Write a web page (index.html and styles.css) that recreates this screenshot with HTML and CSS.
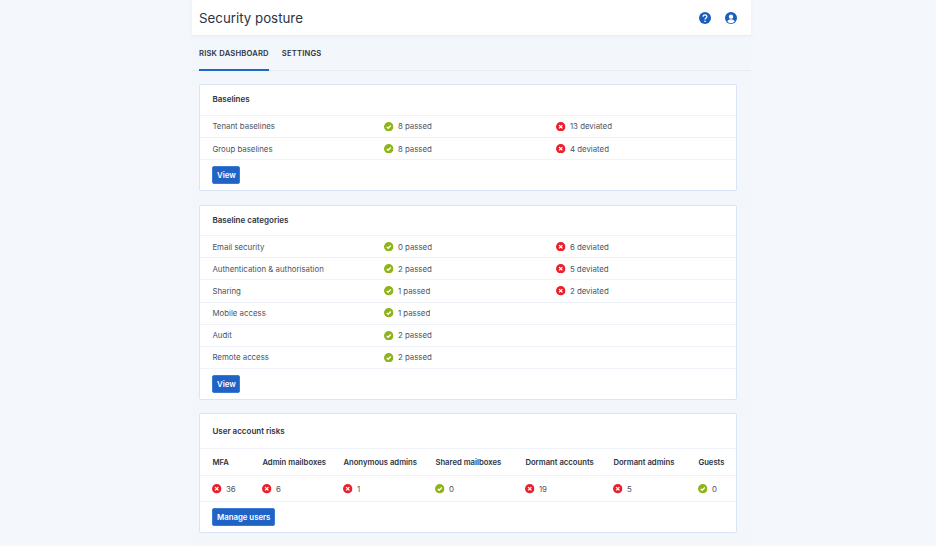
FILE: index.html
```html
<!DOCTYPE html>
<html lang="en">
<head>
    <meta charset="UTF-8">
    <title>Security posture</title>
    <link rel="stylesheet" href="styles.css">
</head>
<body>
<svg class="sprites" width="0" height="0">
    <symbol id="ok" viewBox="0 0 16 16">
        <circle cx="8" cy="8" r="8" fill="#8fb31a"/>
        <path d="M4.6 8.2l2.4 2.4 4.4-4.8" fill="none" stroke="#fff" stroke-width="2.2"/>
    </symbol>
    <symbol id="bad" viewBox="0 0 16 16">
        <circle cx="8" cy="8" r="8" fill="#e8202c"/>
        <path d="M5.2 5.2l5.6 5.6M10.8 5.2l-5.6 5.6" fill="none" stroke="#fff" stroke-width="2.2"/>
    </symbol>
</svg>
<div class="page">
    <header class="topbar">
        <h1>Security posture</h1>
        <div class="topbar-icons">
            <svg class="topicon" viewBox="0 0 16 16">
                <circle cx="8" cy="8" r="8" fill="#1a5dbd"/>
                <path d="M5.5 6.2a2.5 2.3 0 1 1 3.9 1.9c-.9.6-1.4 1-1.4 2" fill="none" stroke="#fff" stroke-width="1.7"/>
                <circle cx="8" cy="12.4" r="1.1" fill="#fff"/>
            </svg>
            <svg class="topicon" viewBox="0 0 16 16">
                <circle cx="8" cy="8" r="8" fill="#1a5dbd"/>
                <circle cx="8" cy="6.2" r="2.9" fill="#fff"/>
                <path d="M3 12.6c.8-2 2.8-2.9 5-2.9s4.2.9 5 2.9a6.6 6.6 0 0 1-10 0z" fill="#fff"/>
            </svg>
        </div>
    </header>
    <nav class="tabs">
        <a class="tab active">RISK DASHBOARD</a>
        <a class="tab">SETTINGS</a>
    </nav>
    <main class="content">
        <section class="card">
            <h2>Baselines</h2>
            <div class="row"><span>Tenant baselines</span><span class="stat"><svg class="ico"><use href="#ok"/></svg>8 passed</span><span class="stat"><svg class="ico"><use href="#bad"/></svg>13 deviated</span></div>
            <div class="row"><span>Group baselines</span><span class="stat"><svg class="ico"><use href="#ok"/></svg>8 passed</span><span class="stat"><svg class="ico"><use href="#bad"/></svg>4 deviated</span></div>
            <div class="actions"><button class="btn">View</button></div>
        </section>
        <section class="card">
            <h2>Baseline categories</h2>
            <div class="row"><span>Email security</span><span class="stat"><svg class="ico"><use href="#ok"/></svg>0 passed</span><span class="stat"><svg class="ico"><use href="#bad"/></svg>6 deviated</span></div>
            <div class="row"><span>Authentication &amp; authorisation</span><span class="stat"><svg class="ico"><use href="#ok"/></svg>2 passed</span><span class="stat"><svg class="ico"><use href="#bad"/></svg>5 deviated</span></div>
            <div class="row"><span>Sharing</span><span class="stat"><svg class="ico"><use href="#ok"/></svg>1 passed</span><span class="stat"><svg class="ico"><use href="#bad"/></svg>2 deviated</span></div>
            <div class="row"><span>Mobile access</span><span class="stat"><svg class="ico"><use href="#ok"/></svg>1 passed</span></div>
            <div class="row"><span>Audit</span><span class="stat"><svg class="ico"><use href="#ok"/></svg>2 passed</span></div>
            <div class="row"><span>Remote access</span><span class="stat"><svg class="ico"><use href="#ok"/></svg>2 passed</span></div>
            <div class="actions"><button class="btn">View</button></div>
        </section>
        <section class="card">
            <h2 class="tall">User account risks</h2>
            <div class="risks risks-head">
                <span>MFA</span><span>Admin mailboxes</span><span>Anonymous admins</span><span>Shared mailboxes</span><span>Dormant accounts</span><span>Dormant admins</span><span>Guests</span>
            </div>
            <div class="risks risks-vals">
                <span class="stat"><svg class="ico"><use href="#bad"/></svg>36</span>
                <span class="stat"><svg class="ico"><use href="#bad"/></svg>6</span>
                <span class="stat"><svg class="ico"><use href="#bad"/></svg>1</span>
                <span class="stat"><svg class="ico"><use href="#ok"/></svg>0</span>
                <span class="stat"><svg class="ico"><use href="#bad"/></svg>19</span>
                <span class="stat"><svg class="ico"><use href="#bad"/></svg>5</span>
                <span class="stat"><svg class="ico"><use href="#ok"/></svg>0</span>
            </div>
            <div class="actions"><button class="btn">Manage users</button></div>
        </section>
    </main>
</div>
</body>
</html>
```

FILE: styles.css
```css
html,body{
    margin:0;
    height:100%;
    overflow:hidden;
    background:#f4f7fc;
}
body{
    font-family:Inter,"Liberation Sans",sans-serif;
    font-size:7.85px;
    color:#4b5364;
}
.sprites{
    position:absolute;
}
.page{
    width:559px;
    min-height:100%;
    margin-left:192px;
    background:#f3f6fb;
}
.topbar{
    height:35px;
    padding:0 14.5px 0 7px;
    display:flex;
    align-items:center;
    justify-content:space-between;
    background:#fff;
    border-bottom:1px solid #e9edf4;
    box-shadow:0 0 4px rgba(190,205,230,0.15);
}
h1{
    margin:0;
    font-size:13.3px;
    font-weight:400;
    color:#2b3445;
}
.topbar-icons{
    display:flex;
    gap:14px;
}
.topicon{
    width:12px;
    height:12px;
    display:block;
}
.tabs{
    height:34px;
    padding:0 7px;
    display:flex;
    gap:13px;
    border-bottom:1px solid #e6ebf3;
}
.tab{
    height:35px;
    line-height:35px;
    box-sizing:border-box;
    font-size:7.6px;
    font-weight:600;
    letter-spacing:0.2px;
    color:#2b3445;
}
.tab.active{
    border-bottom:2px solid #1f66c9;
}
.content{
    padding:13.4px 14px 13px 7px;
    display:flex;
    flex-direction:column;
    gap:13.4px;
}
.card{
    background:#fff;
    border:1px solid #d9e4f4;
    border-radius:2px;
}
h2{
    margin:0;
    height:29.4px;
    line-height:29.4px;
    padding:0 12.4px;
    font-size:8px;
    font-weight:600;
    color:#2b3445;
}
h2.tall{
    height:34px;
    line-height:34px;
}
.row{
    height:22.2px;
    padding:0 12.4px;
    display:grid;
    grid-template-columns:172px 172px 1fr;
    align-items:center;
    border-top:1px solid #eff3f9;
    box-sizing:border-box;
}
.stat{
    display:flex;
    align-items:center;
    gap:4px;
}
.ico{
    width:9.5px;
    height:9.5px;
    flex:none;
}
.actions{
    padding:6px 12.4px;
    border-top:1px solid #eff3f9;
}
.btn{
    display:block;
    height:18px;
    padding:0 3.6px;
    font:600 7.8px Inter,"Liberation Sans",sans-serif;
    color:#fff;
    background:#1f63c6;
    border:1px solid #3f7ad2;
    border-radius:2px;
}
.risks{
    padding:0 12.4px;
    display:grid;
    grid-template-columns:50px 81px 92px 90px 88px 85px 1fr;
    align-items:center;
    border-top:1px solid #eff3f9;
    box-sizing:border-box;
}
.risks-head{
    height:27px;
    font-weight:600;
    font-size:7.7px;
    color:#2b3445;
}
.risks-vals{
    height:26px;
}
```
